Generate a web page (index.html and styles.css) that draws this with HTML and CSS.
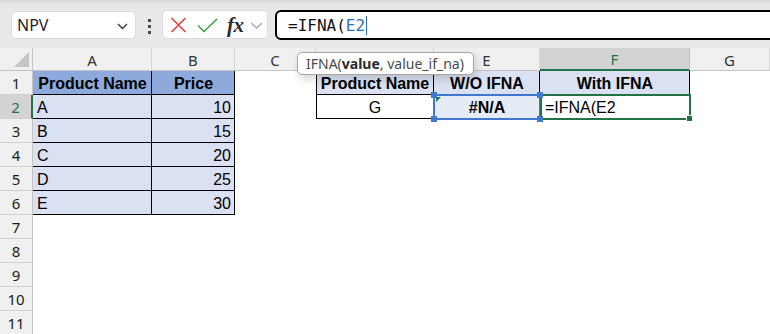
FILE: index.html
```html
<!DOCTYPE html>
<html>
<head>
<meta charset="utf-8">
<link rel="stylesheet" href="styles.css">
</head>
<body>
<div class="topbar">
  <div class="namebox">
    <span class="nb-text">NPV</span>
    <svg class="nb-chev" width="11" height="7" viewBox="0 0 11 7"><path d="M1 1 L5.5 5.5 L10 1" fill="none" stroke="#333" stroke-width="1.3"/></svg>
  </div>
  <div class="grip"><i></i><i></i><i></i></div>
  <div class="fxbox">
    <svg class="ic-x" width="17" height="16" viewBox="0 0 17 16"><path d="M1.5 1 L15.5 15 M15.5 1 L1.5 15" stroke="#e2403f" stroke-width="1.6" fill="none"/></svg>
    <svg class="ic-ok" width="21" height="15" viewBox="0 0 21 15"><path d="M1 7.5 L7 13.5 L20 1" stroke="#3e9b48" stroke-width="1.6" fill="none"/></svg>
    <span class="fx">fx</span>
    <svg class="ic-dd" width="13" height="7" viewBox="0 0 13 7"><path d="M1 1 L6.5 6 L12 1" stroke="#a9a9a9" stroke-width="1.3" fill="none"/></svg>
  </div>
  <div class="formula"><span>=IFNA(</span><span class="ref">E2</span><span class="caret"></span></div>
</div>

<div class="sheet">
  <div class="corner"><span class="tri"></span></div>
  <div class="ch">A</div>
  <div class="ch">B</div>
  <div class="ch">C</div>
  <div class="ch">D</div>
  <div class="ch">E</div>
  <div class="ch ch-sel">F</div>
  <div class="ch">G</div>

  <div class="rh">1</div>
  <div class="c t hd ctr b">Product Name</div>
  <div class="c t hd ctr b">Price</div>
  <div class="c"></div>
  <div class="c t tl lt ctr b">Product Name</div>
  <div class="c t lt ctr b">W/O IFNA</div>
  <div class="c t lt ctr b">With IFNA</div>
  <div class="c"></div>

  <div class="rh rh-sel">2</div>
  <div class="c t lt">A</div>
  <div class="c t lt r">10</div>
  <div class="c"></div>
  <div class="c t tl ctr">G</div>
  <div class="c t ref-cell ctr b"><span class="err"></span>#N/A<span class="h h1"></span><span class="h h2"></span><span class="h h3"></span><span class="h h4"></span></div>
  <div class="c t active">=IFNA(E2<span class="gh"></span></div>
  <div class="c"></div>

  <div class="rh">3</div>
  <div class="c t lt">B</div>
  <div class="c t lt r">15</div>
  <div class="c"></div><div class="c"></div><div class="c"></div><div class="c"></div><div class="c"></div>

  <div class="rh">4</div>
  <div class="c t lt">C</div>
  <div class="c t lt r">20</div>
  <div class="c"></div><div class="c"></div><div class="c"></div><div class="c"></div><div class="c"></div>

  <div class="rh">5</div>
  <div class="c t lt">D</div>
  <div class="c t lt r">25</div>
  <div class="c"></div><div class="c"></div><div class="c"></div><div class="c"></div><div class="c"></div>

  <div class="rh">6</div>
  <div class="c t lt">E</div>
  <div class="c t lt r">30</div>
  <div class="c"></div><div class="c"></div><div class="c"></div><div class="c"></div><div class="c"></div>

  <div class="rh">7</div><div class="c"></div><div class="c"></div><div class="c"></div><div class="c"></div><div class="c"></div><div class="c"></div><div class="c"></div>
  <div class="rh">8</div><div class="c"></div><div class="c"></div><div class="c"></div><div class="c"></div><div class="c"></div><div class="c"></div><div class="c"></div>
  <div class="rh">9</div><div class="c"></div><div class="c"></div><div class="c"></div><div class="c"></div><div class="c"></div><div class="c"></div><div class="c"></div>
  <div class="rh">10</div><div class="c"></div><div class="c"></div><div class="c"></div><div class="c"></div><div class="c"></div><div class="c"></div><div class="c"></div>
  <div class="rh">11</div><div class="c"></div><div class="c"></div><div class="c"></div><div class="c"></div><div class="c"></div><div class="c"></div><div class="c"></div>

  <div class="tooltip">IFNA(<b>value</b>, value_if_na)</div>
</div>
</body>
</html>
```

FILE: styles.css
```css
html, body {
  margin: 0;
  padding: 0;
}
body {
  width: 770px;
  height: 334px;
  overflow: hidden;
  background: #fff;
  font-family: "Liberation Sans", Arial, sans-serif;
}

/* ---------- top bar ---------- */
.topbar {
  display: flex;
  align-items: flex-start;
  height: 48px;
  box-sizing: border-box;
  padding-top: 10px;
  background: linear-gradient(#d6d4d6 0, #e4e2e4 3px, #e9e7e9 6px, #e9e7e9 100%);
}
.namebox {
  margin-left: 11px;
  margin-top: 1px;
  width: 125px;
  height: 28px;
  box-sizing: border-box;
  background: #fff;
  border: 1px solid #dcdadc;
  border-radius: 5px;
  display: flex;
  align-items: center;
  padding-left: 5px;
}
.nb-text {
  font-family: "Noto Sans", sans-serif;
  font-size: 16px;
  color: #1f1f1f;
  flex: 1;
  line-height: 20px;
}
.nb-chev {
  margin-right: 7px;
  margin-top: 2px;
}
.grip {
  margin-left: 12px;
  margin-top: 9px;
  width: 3px;
  display: flex;
  flex-direction: column;
  gap: 3px;
}
.grip i {
  display: block;
  width: 3px;
  height: 3px;
  background: #4a4a4a;
}
.fxbox {
  margin-left: 11px;
  width: 106px;
  height: 29px;
  box-sizing: border-box;
  background: #fff;
  border: 1px solid #dcdadc;
  border-radius: 5px;
  display: flex;
  align-items: center;
  padding-left: 7px;
}
.ic-x { margin-top: 1px; }
.ic-ok { margin-left: 10px; margin-top: 1px; }
.fx {
  margin-left: 9px;
  font-family: "Liberation Serif", serif;
  font-style: italic;
  font-weight: bold;
  font-size: 21px;
  line-height: 20px;
  color: #2b2b2b;
  letter-spacing: -0.5px;
}
.ic-dd { margin-left: 6px; margin-top: 2px; }

.formula {
  margin-left: 7px;
  flex: 1;
  margin-right: -20px;
  height: 30px;
  box-sizing: border-box;
  background: #fff;
  border: 2px solid #000;
  border-radius: 6px 0 0 6px;
  display: flex;
  align-items: center;
  padding-left: 11px;
  font-family: "DejaVu Sans Mono", monospace;
  font-size: 16px;
  color: #111;
}
.formula .ref { color: #2a6fc1; }
.caret {
  display: inline-block;
  width: 1px;
  height: 19px;
  background: #2a6fc1;
  margin-left: 1px;
}

/* ---------- sheet ---------- */
.sheet {
  position: relative;
  display: grid;
  grid-template-columns: 33px 119px 83px 81px 118px 106px 150px 80px;
  grid-template-rows: 23px;
  grid-auto-rows: 24px;
}
.corner {
  position: relative;
  background: #f0f0f0;
  border-right: 1px solid #c4c4c4;
  border-bottom: 1px solid #c4c4c4;
}
.tri {
  position: absolute;
  right: 3px;
  bottom: 3px;
  width: 15px;
  height: 15px;
  background: #c6c6c6;
  clip-path: polygon(100% 0, 100% 100%, 0 100%);
}
.ch {
  background: #f0f0f0;
  border-right: 1px solid #d6d6d6;
  border-bottom: 1px solid #c4c4c4;
  font-family: "Noto Sans", sans-serif;
  font-size: 15px;
  color: #333;
  display: flex;
  align-items: center;
  justify-content: center;
  padding-top: 1px;
}
.ch-sel {
  background: #d3d3d3;
  color: #217346;
  border-bottom: 2px solid #217346;
  border-right-color: #bdbdbd;
}
.rh {
  background: #f0f0f0;
  border-right: 1px solid #c4c4c4;
  border-bottom: 1px solid #d0d0d0;
  font-family: "Noto Sans", sans-serif;
  font-size: 15px;
  color: #1a1a1a;
  display: flex;
  align-items: center;
  justify-content: center;
  padding-top: 1px;
  box-sizing: border-box;
}
.rh-sel {
  background: #d3d3d3;
  color: #217346;
  border-right: 2px solid #217346;
}

.c {
  position: relative;
  display: flex;
  align-items: flex-end;
  padding: 0 4px 2px 4px;
  box-sizing: border-box;
  font-size: 16px;
  line-height: 18px;
  color: #000;
  white-space: nowrap;
}
.t { box-shadow: inset -1px -1px 0 #000; }
.t.tl { box-shadow: inset 1px 0 0 #000, inset -1px -1px 0 #000; }
.hd { background: #8ea9db; }
.lt { background: #d9e1f2; }
.b { font-weight: bold; }
.ctr { justify-content: center; }
.r { justify-content: flex-end; }

.ref-cell { background: #e6ecf7; }
.ref-cell::after {
  content: "";
  position: absolute;
  left: -1px;
  top: -1px;
  right: -1px;
  bottom: -1px;
  border: 2px solid #3f77d1;
}
.err {
  position: absolute;
  left: 2px;
  top: 2px;
  width: 5px;
  height: 5px;
  background: #217346;
  clip-path: polygon(0 0, 100% 0, 0 100%);
}
.h {
  position: absolute;
  width: 6px;
  height: 6px;
  background: #3f77d1;
  z-index: 2;
}
.h1 { left: -3px; top: -3px; }
.h2 { right: -3px; top: -3px; }
.h3 { left: -3px; bottom: -3px; }
.h4 { right: -3px; bottom: -3px; }

.active { padding-left: 5px; }
.active::after {
  content: "";
  position: absolute;
  left: 0;
  top: -1px;
  right: -1px;
  bottom: -1px;
  border: 2px solid #217346;
}
.gh {
  position: absolute;
  right: -3px;
  bottom: -3px;
  width: 5px;
  height: 5px;
  background: #217346;
  border: 1px solid #fff;
  z-index: 2;
}

.tooltip {
  position: absolute;
  left: 297px;
  top: 4px;
  height: 23px;
  box-sizing: border-box;
  padding: 0 9px 0 8px;
  background: #fff;
  border: 1px solid #a6a6a6;
  border-radius: 5px;
  box-shadow: 2px 4px 10px rgba(0, 0, 0, 0.16);
  font-family: "Noto Sans", sans-serif;
  font-size: 14px;
  line-height: 21px;
  color: #4a4a4a;
  white-space: nowrap;
  z-index: 5;
}
.tooltip b { color: #2a2a2a; }
```
